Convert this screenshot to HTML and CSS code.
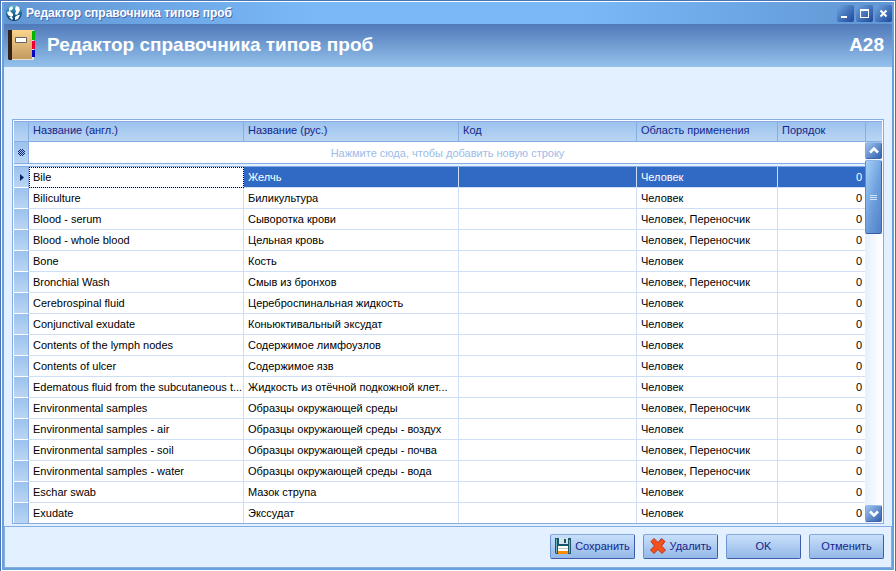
FILE: index.html
```
<!DOCTYPE html>
<html lang="ru">
<head>
<meta charset="utf-8">
<title>Редактор справочника типов проб</title>
<link rel="stylesheet" href="styles.css">
</head>
<body>
<div class="window">
  <div class="frame">
    <header class="titlebar">
      <svg class="app-icon" width="16" height="16" viewBox="0 0 16 16" aria-hidden="true">
        <defs><linearGradient id="globe" x1="0" y1="0" x2="0" y2="1"><stop offset="0" stop-color="#5fb4d6"/><stop offset=".5" stop-color="#1f6c9c"/><stop offset="1" stop-color="#0b3c68"/></linearGradient></defs>
        <circle cx="8" cy="8" r="8" fill="url(#globe)"/>
        <path d="M3 3l3-2 1 2-1 2-3 1zM10 1l3 1 1 3-2 4-2 1-1-1 1-3-1-2zM1 7l3-1 3 3v2l-2 1-3-2zM3 12l3 0 1 2-1 1zM9 12l3-2 2 0-2 4-3 1z" fill="#fff"/>
      </svg>
      <span class="title">Редактор справочника типов проб</span>
      <div class="controls">
        <button class="ctl" type="button" aria-label="Свернуть"><svg width="17" height="17" viewBox="0 0 17 17"><path d="M4 11h6v2H4z" fill="#fff"/></svg></button>
        <button class="ctl" type="button" aria-label="Развернуть"><svg width="17" height="17" viewBox="0 0 17 17"><path d="M4 4h9v9H4zM5 6v6h7V6z" fill="#fff" fill-rule="evenodd"/></svg></button>
        <button class="ctl" type="button" aria-label="Закрыть"><svg width="17" height="17" viewBox="0 0 17 17"><path d="M5.500 5.500l6 6M11.500 5.500l-6 6" stroke="#fff" stroke-width="2"/></svg></button>
      </div>
    </header>
    <div class="banner">
      <svg class="book" width="28" height="32" viewBox="0 0 28 32" aria-hidden="true">
        <defs><linearGradient id="cover" x1="0" y1="0" x2="0" y2="1"><stop offset="0" stop-color="#fbd48c"/><stop offset="1" stop-color="#c49a62"/></linearGradient></defs>
        <path d="M2 1h24v30H2z" fill="#e8e0d0"/>
        <path d="M0 1h24v29H0z" fill="url(#cover)"/>
        <path d="M24 2h3v9h-3z" fill="#00b400"/><path d="M24 12h3v8h-3z" fill="#f00030"/><path d="M24 21h3v7h-3z" fill="#0000c8"/>
        <path d="M0 1h4v30H1l-1-1z" fill="#33221a"/>
        <path d="M7.500 8.500h11v5h-11z" fill="#fff" stroke="#666"/>
      </svg>
      <h1>Редактор справочника типов проб</h1>
      <span class="code">A28</span>
    </div>
    <main class="content">
      <div class="grid">
        <div class="rows">
        <table>
          <colgroup><col class="c-mark"><col class="c-name"><col class="c-name"><col><col class="c-scope"><col class="c-order"></colgroup>
          <thead>
            <tr><th class="mark"></th><th>Название (англ.)</th><th>Название (рус.)</th><th>Код</th><th>Область применения</th><th>Порядок</th></tr>
          </thead>
          <tbody>
            <tr class="new"><td class="mark"><svg width="7" height="7" viewBox="0 0 7 7"><path d="M2 0h1v1H2zM4 0h1v1H4zM3 1h1v1H3zM1 1h1v1H1zM5 1h1v1H5zM0 2h1v1H0zM2 2h1v1H2zM4 2h1v1H4zM6 2h1v1H6zM1 3h1v1H1zM3 3h1v1H3zM5 3h1v1H5zM0 4h1v1H0zM2 4h1v1H2zM4 4h1v1H4zM6 4h1v1H6zM1 5h1v1H1zM3 5h1v1H3zM5 5h1v1H5zM2 6h1v1H2zM4 6h1v1H4z" fill="#0a246a"/></svg></td><td colspan="5">Нажмите сюда, чтобы добавить новую строку</td></tr>
            <tr class="split"><td colspan="6"></td></tr>
            <tr class="selected"><td class="mark"><svg width="4" height="7" viewBox="0 0 4 7"><path d="M0 0l4 3.500L0 7z" fill="#0a246a"/></svg></td><td class="focus">Bile</td><td>Желчь</td><td></td><td>Человек</td><td>0</td></tr>
            <tr><td class="mark"></td><td>Biliculture</td><td>Биликультура</td><td></td><td>Человек</td><td>0</td></tr>
            <tr><td class="mark"></td><td>Blood - serum</td><td>Сыворотка крови</td><td></td><td>Человек, Переносчик</td><td>0</td></tr>
            <tr><td class="mark"></td><td>Blood - whole blood</td><td>Цельная кровь</td><td></td><td>Человек, Переносчик</td><td>0</td></tr>
            <tr><td class="mark"></td><td>Bone</td><td>Кость</td><td></td><td>Человек</td><td>0</td></tr>
            <tr><td class="mark"></td><td>Bronchial Wash</td><td>Смыв из бронхов</td><td></td><td>Человек, Переносчик</td><td>0</td></tr>
            <tr><td class="mark"></td><td>Cerebrospinal fluid</td><td>Цереброспинальная жидкость</td><td></td><td>Человек</td><td>0</td></tr>
            <tr><td class="mark"></td><td>Conjunctival exudate</td><td>Коньюктивальный эксудат</td><td></td><td>Человек</td><td>0</td></tr>
            <tr><td class="mark"></td><td>Contents of the lymph nodes</td><td>Содержимое лимфоузлов</td><td></td><td>Человек</td><td>0</td></tr>
            <tr><td class="mark"></td><td>Contents of ulcer</td><td>Содержимое язв</td><td></td><td>Человек</td><td>0</td></tr>
            <tr><td class="mark"></td><td>Edematous fluid from the subcutaneous t...</td><td>Жидкость из отёчной подкожной клет...</td><td></td><td>Человек</td><td>0</td></tr>
            <tr><td class="mark"></td><td>Environmental samples</td><td>Образцы окружающей среды</td><td></td><td>Человек, Переносчик</td><td>0</td></tr>
            <tr><td class="mark"></td><td>Environmental samples - air</td><td>Образцы окружающей среды - воздух</td><td></td><td>Человек</td><td>0</td></tr>
            <tr><td class="mark"></td><td>Environmental samples - soil</td><td>Образцы окружающей среды - почва</td><td></td><td>Человек, Переносчик</td><td>0</td></tr>
            <tr><td class="mark"></td><td>Environmental samples - water</td><td>Образцы окружающей среды - вода</td><td></td><td>Человек, Переносчик</td><td>0</td></tr>
            <tr><td class="mark"></td><td>Eschar swab</td><td>Мазок струпа</td><td></td><td>Человек</td><td>0</td></tr>
            <tr><td class="mark"></td><td>Exudate</td><td>Экссудат</td><td></td><td>Человек</td><td>0</td></tr>
          </tbody>
        </table>
        </div>
        <div class="scroll">
          <div class="corner"></div>
          <button class="arrow" type="button" aria-label="Вверх"><svg width="10" height="7" viewBox="0 0 10 7"><path d="M1 5.500l4-4 4 4" fill="none" stroke="#fff" stroke-width="2.500"/></svg></button>
          <div class="thumb"><i></i><i></i><i></i></div>
          <button class="arrow down" type="button" aria-label="Вниз"><svg width="10" height="7" viewBox="0 0 10 7"><path d="M1 1.500l4 4 4-4" fill="none" stroke="#fff" stroke-width="2.500"/></svg></button>
        </div>
      </div>
    </main>
    <footer class="actions">
      <button class="btn save" type="button"><svg width="16" height="16" viewBox="0 0 16 16" aria-hidden="true"><path d="M0 0h16v16H1l-1-1z" fill="#1c5566"/><path d="M1 1h1v14H1zM14 2h1v13h-1z" fill="#6fb0bd"/><path d="M4 0h9v6H4z" fill="#d3e6ea"/><path d="M9 1h2v4H9z" fill="#1c5566"/><path d="M3 8h10v5H3z" fill="#fff"/><path d="M3 10h10v1H3z" fill="#ccc"/><path d="M3 13h10v3H3z" fill="#ff8a00"/></svg>Сохранить</button>
      <button class="btn" type="button"><svg width="16" height="16" viewBox="0 0 16 16" aria-hidden="true"><path d="M4 .500l4 4 3.500-4L15 3.500 11.500 8l4 4-3.500 3.500-4-4-4 4L.500 12l4-4L1 3.500z" fill="#f4501c" stroke="#b8321c"/></svg>Удалить</button>
      <button class="btn" type="button">OK</button>
      <button class="btn" type="button">Отменить</button>
    </footer>
  </div>
</div>
</body>
</html>
```
FILE: styles.css
```
* { box-sizing: border-box; }
body { margin: 0; font: 11px/14px "Liberation Sans", Arial, sans-serif; color: #000; }
button { font: inherit; padding: 0; }
svg { display: block; flex: none; }
.window { min-height: 100vh; display: flex; padding: 1px; background: #fff; border: 1px solid #4a73b5; }
.frame { flex: 1; display: flex; flex-direction: column; border: solid #6aa1dc; border-width: 0 2px 2px; background: #e2f0ff; min-width: 0; }
.titlebar { height: 22px; display: flex; align-items: center; gap: 4px; padding: 0 0 0 2px; background: linear-gradient(90deg, #6096d2, #7ab8f8 35%, #7ab8f8 65%, #6096d2); }
.title { flex: 1; font-size: 12px; font-weight: 700; color: #fff; text-shadow: 1px 1px 0 #4a68b0; }
.controls { display: flex; gap: 2px; }
.ctl { width: 17px; height: 17px; border: 0; border-radius: 2px; background: linear-gradient(135deg, #6fa4de, #1c489c); }
.banner { height: 43px; display: flex; align-items: center; gap: 11px; padding: 0 8px 2px 4px; background: linear-gradient(#5079b9, #94c2ec); color: #fff; font-size: 19px; line-height: 24px; font-weight: 700; }
h1 { flex: 1; margin: 0; font: inherit; }
.content { flex: 1; padding: 52px 8px 2px; }
.grid { display: flex; border: 1px solid #86ade3; padding: 1px 1px 0; background: #fff; }
.rows { flex: 1; min-width: 0; }
table { width: 100%; table-layout: fixed; border-collapse: separate; border-spacing: 0; }
.c-mark { width: 15px; }
.c-name { width: 215px; }
.c-scope { width: 141px; }
.c-order { width: 87px; }
th, td { padding: 0 4px; text-align: left; font-weight: 400; white-space: nowrap; overflow: hidden; border: solid #cfdff5; border-width: 0 1px 1px 0; }
th { height: 21px; color: #15258a; border-color: #86ade3; border-top-width: 1px; background: linear-gradient(#9cc2ee, #bad5f3); padding-bottom: 3px; }
td { height: 21px; }
td:last-child { text-align: right; padding-right: 3px; border-right: 0; }
th:last-child { border-right: 0; }
td.mark { padding: 0 3px 0 4px; border-right-color: #86ade3; border-bottom-color: #fff; background: linear-gradient(#9cc2ee, #bad5f3); }
.selected td.mark { padding-left: 6px; }
.new td:last-child { text-align: center; color: #9dbbe8; }
.new td { height: 22px; border-bottom-color: #86ade3; }
.split td { height: 3px; padding: 0; background: #e2f0ff; border-bottom-color: #86ade3; }
.selected td:not(.mark) { background: #316ac5; color: #fff; }
.selected td.focus { background: #fff; color: #000; outline: 1px dotted #000; outline-offset: -1px; }
tr:last-child td { height: 20px; border-bottom: 0; }
.scroll { width: 17px; display: flex; flex-direction: column; background: linear-gradient(90deg, #e4f0fd, #fff); }
.corner { height: 21px; border: solid #86ade3; border-width: 1px 0 1px 1px; background: linear-gradient(#9cc2ee, #bad5f3); }
.arrow { width: 17px; height: 17px; display: grid; place-items: center; border: 1px solid; border-color: #9cc0ea #3f66b0 #3f66b0 #7fa6dc; border-radius: 2px; background: linear-gradient(135deg, #9cc4ef, #3460b0); }
.thumb { height: 74px; margin-top: 1px; display: flex; flex-direction: column; align-items: center; justify-content: center; gap: 1px; border: 1px solid; border-color: #8ab4e6 #4064b0 #3a58a8 #5f8bce; border-radius: 2px; background: linear-gradient(105deg, #a4d0f8, #6fa2de 50%, #5080c8); }
.thumb i { width: 7px; height: 1px; background: #d5e6fa; }
.down { margin-top: auto; margin-bottom: 1px; }
.actions { display: flex; justify-content: flex-end; gap: 8px; padding: 7px 7px 8px; border: 1px solid #86ade3; }
.btn { width: 75px; height: 25px; display: flex; align-items: center; justify-content: center; gap: 4px; padding-bottom: 1px; color: #15258a; border: 1px solid; border-color: #86a8dc #3f5cab #3f5cab #6f94d2; border-radius: 2px; background: linear-gradient(#c8dffa, #94b8e8); }
.save { width: 85px; }
```
